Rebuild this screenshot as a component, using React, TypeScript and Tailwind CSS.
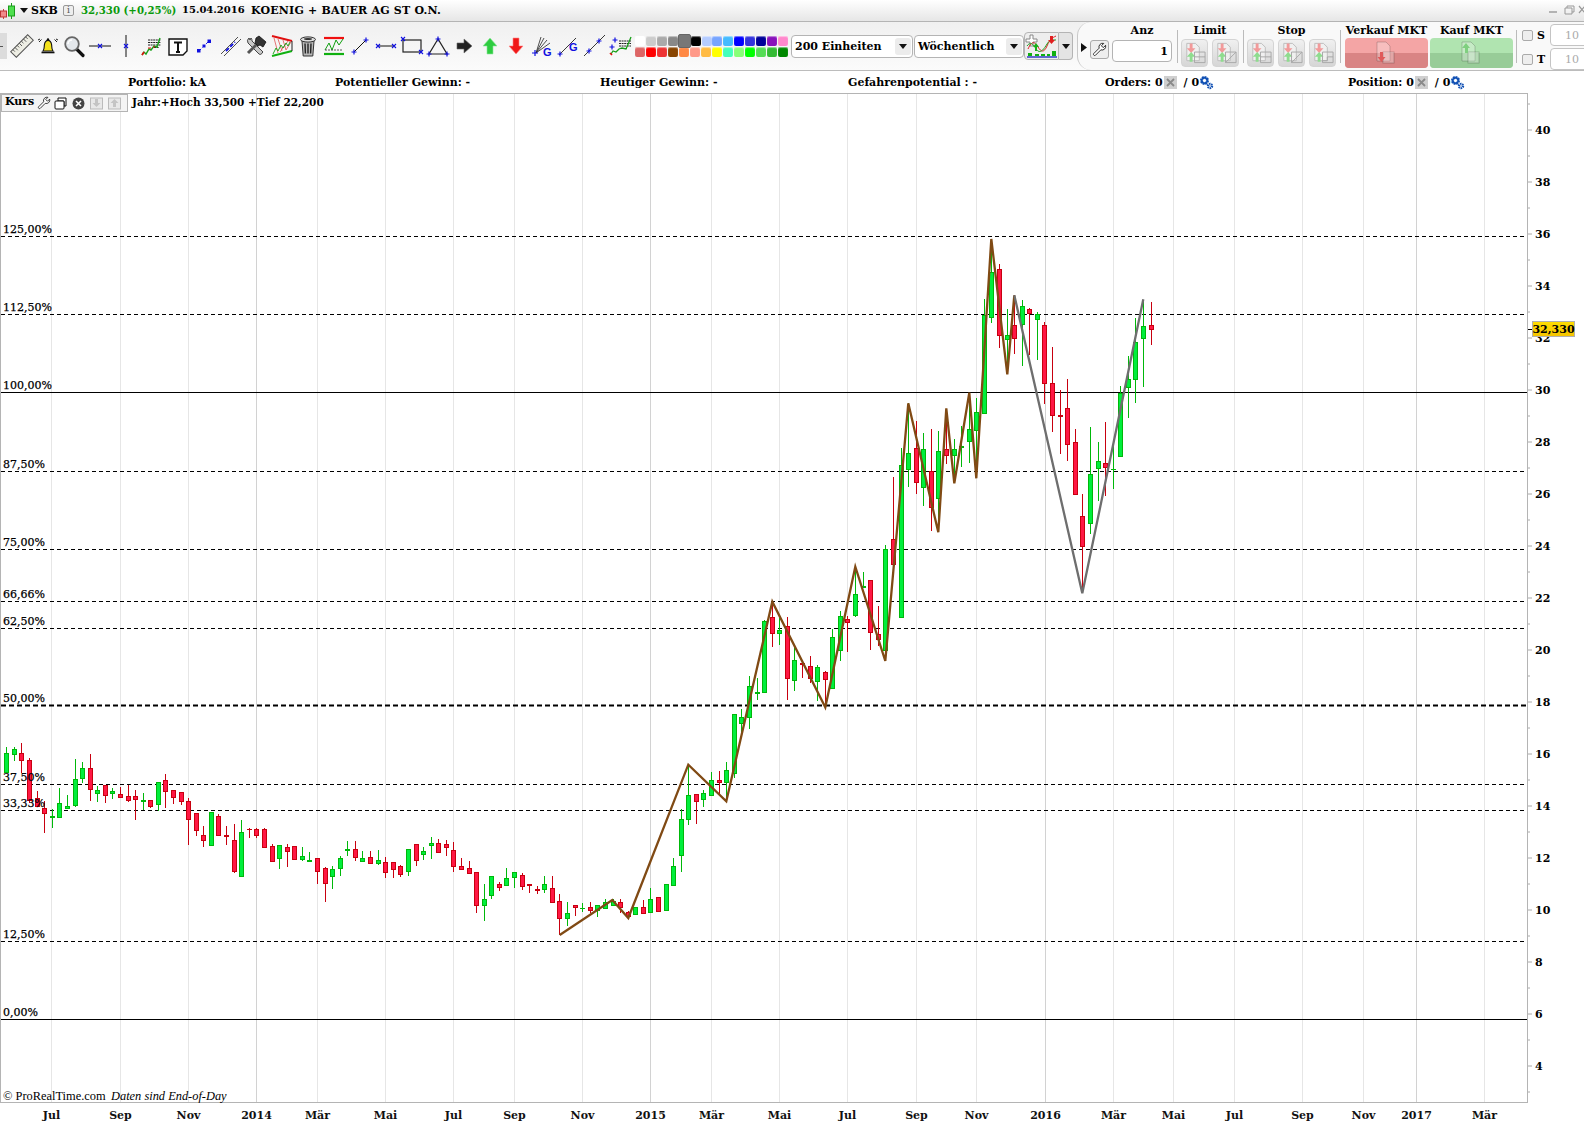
import React from 'react';

type Row = ['g' | 'r', number, number, number, number];

// wick top, body top, body bottom, wick bottom, read off the chart in 3x pixels per block
const blocks: { off: number; rows: Row[] }[] = [
  {
    off: 730,
    rows: [
      ['g', 52, 70, 128, 128], ['g', 52, 58, 73, 92], ['r', 40, 70, 92, 130], ['r', 85, 91, 210, 220],
      ['r', 183, 205, 228, 228], ['r', 212, 235, 250, 308], ['g', 238, 259, 261, 293], ['g', 175, 220, 263, 263],
      ['g', 195, 229, 236, 236], ['g', 88, 148, 227, 231], ['g', 97, 115, 146, 160], ['r', 72, 115, 179, 212],
      ['g', 168, 181, 191, 216], ['r', 165, 166, 196, 219], ['g', 175, 184, 191, 207], ['r', 171, 193, 203, 203],
      ['r', 165, 199, 212, 215], ['r', 180, 199, 209, 269], ['g', 190, 211, 214, 240], ['r', 211, 211, 230, 234],
      ['g', 155, 157, 224, 242], ['r', 132, 151, 184, 234], ['r', 181, 181, 203, 221], ['r', 187, 187, 214, 224],
      ['r', 205, 214, 268, 344], ['r', 250, 250, 301, 318], ['r', 288, 316, 332, 350], ['g', 247, 247, 346, 346],
      ['r', 251, 259, 316, 316], ['r', 288, 316, 319, 344], ['r', 282, 331, 425, 429], ['g', 270, 307, 439, 439],
      ['r', 295, 296, 298, 323], ['r', 295, 297, 314, 324], ['r', 295, 298, 352, 352], ['r', 342, 349, 394, 394],
      ['g', 346, 346, 386, 416], ['r', 342, 352, 365, 410], ['r', 349, 349, 389, 389], ['g', 351, 379, 388, 392],
      ['g', 366, 390, 392, 392], ['r', 385, 385, 424, 461], ['r', 412, 415, 460, 515], ['g', 408, 418, 440, 476],
      ['g', 379, 385, 415, 437], ['g', 334, 358, 362, 377], ['r', 334, 358, 382, 392], ['g', 363, 385, 395, 395],
      ['r', 363, 382, 400, 400], ['g', 361, 391, 401, 404], ['r', 381, 397, 427, 443], ['r', 397, 397, 418, 443],
    ],
  },
  {
    off: 740,
    rows: [
      ['r', 376, 378, 402, 410], ['g', 328, 328, 395, 408], ['r', 313, 313, 362, 378], ['g', 322, 334, 344, 360],
      ['g', 292, 310, 317, 357], ['r', 297, 310, 338, 338], ['r', 300, 313, 323, 348], ['r', 306, 331, 380, 396],
      ['r', 354, 378, 386, 386], ['r', 363, 385, 401, 401], ['r', 397, 397, 497, 519], ['g', 432, 478, 497, 543],
      ['g', 409, 409, 467, 477], ['r', 426, 433, 443, 453], ['g', 384, 415, 437, 437], ['g', 397, 397, 412, 444],
      ['r', 400, 406, 440, 450], ['r', 433, 433, 437, 459], ['r', 438, 448, 452, 462], ['g', 408, 433, 449, 459],
      ['r', 408, 445, 488, 488], ['r', 462, 484, 536, 585], ['g', 486, 520, 536, 558], ['r', 496, 496, 502, 528],
      ['g', 489, 503, 506, 516], ['r', 486, 502, 510, 520], ['g', 496, 496, 512, 531], ['g', 478, 487, 506, 506],
      ['g', 477, 482, 494, 494], ['r', 477, 487, 502, 518], ['r', 514, 515, 527, 527], ['g', 502, 502, 522, 525],
      ['r', 480, 502, 521, 521], ['g', 444, 478, 518, 518], ['r', 472, 472, 514, 514], ['g', 433, 433, 512, 512],
      ['g', 354, 379, 437, 437], ['g', 208, 238, 347, 396], ['g', 75, 166, 239, 255], ['r', 163, 163, 185, 252],
      ['g', 150, 160, 179, 201], ['g', 97, 121, 166, 166], ['r', 93, 121, 128, 165], ['g', 66, 91, 128, 185],
    ],
  },
  {
    off: 540,
    rows: [
      ['g', 523, 523, 700, 713], ['g', 507, 532, 551, 575], ['g', 408, 439, 532, 566], ['g', 415, 456, 458, 480],
      ['g', 240, 244, 457, 457], ['r', 190, 232, 280, 320], ['g', 235, 271, 280, 314], ['r', 232, 257, 412, 479],
      ['g', 320, 361, 421, 452], ['r', 370, 370, 372, 413], ['r', 349, 379, 415, 429], ['g', 376, 382, 424, 482],
      ['r', 393, 397, 418, 500], ['g', 268, 292, 445, 445], ['g', 214, 229, 331, 362], ['r', 228, 238, 247, 335],
      ['g', 90, 163, 226, 230], ['g', 97, 139, 142, 145], ['r', 121, 121, 277, 329], ['r', 198, 283, 299, 318],
      ['g', 15, 28, 331, 360],
    ],
  },
  {
    off: 380,
    rows: [
      ['r', 292, 478, 552, 564], ['g', 205, 256, 711, 711], ['g', 70, 220, 268, 320], ['r', 124, 205, 307, 341],
      ['g', 160, 208, 322, 377], ['r', 148, 274, 383, 452], ['g', 153, 214, 355, 450], ['r', 90, 208, 226, 252],
      ['g', 178, 208, 226, 310], ['g', 138, 199, 200, 262], ['g', 40, 148, 184, 248], ['g', 55, 97, 151, 295],
    ],
  },
  {
    off: 220,
    rows: [
      ['g', 238, 286, 580, 580], ['g', 60, 157, 292, 308], ['r', 132, 148, 346, 383], ['g', 268, 346, 358, 460],
      ['r', 226, 316, 355, 402], ['g', 240, 259, 313, 437], ['r', 265, 268, 281, 406], ['g', 277, 283, 298, 419],
      ['r', 307, 316, 490, 551], ['r', 381, 490, 586, 635], ['r', 510, 585, 588, 702], ['r', 478, 564, 672, 723],
    ],
  },
  {
    off: 380,
    rows: [
      ['r', 148, 187, 343, 343], ['r', 342, 409, 500, 625], ['g', 141, 283, 430, 461], ['g', 186, 244, 265, 362],
      ['r', 127, 250, 263, 347], ['g', 178, 266, 268, 326], ['g', 18, 40, 229, 229],
    ],
  },
  {
    off: 220,
    rows: [
      ['g', 408, 478, 503, 593], ['g', 295, 367, 479, 548], ['g', 240, 319, 355, 500], ['r', 247, 316, 329, 375],
    ],
  },
];

const candles = blocks.flatMap((b) =>
  b.rows.map((r) => ({
    c: r[0],
    h: b.off + r[1] / 3,
    t: b.off + r[2] / 3,
    b: b.off + r[3] / 3,
    l: b.off + r[4] / 3,
  })),
);

const levels = [
  { label: '125,00%', y: 236.5 },
  { label: '112,50%', y: 314.5 },
  { label: '100,00%', y: 392.5, solid: true },
  { label: '87,50%', y: 471.5 },
  { label: '75,00%', y: 549.5 },
  { label: '66,66%', y: 601.5 },
  { label: '62,50%', y: 628.5 },
  { label: '50,00%', y: 705.5, thick: true },
  { label: '37,50%', y: 784.5 },
  { label: '33,33%', y: 810.5 },
  { label: '12,50%', y: 941.5 },
  { label: '0,00%', y: 1019.5, solid: true },
];

const months: [string, number, boolean?][] = [
  ['Jul', 51.5], ['Sep', 120.5], ['Nov', 188.5], ['2014', 256.5, true], ['Mär', 317.5], ['Mai', 385.5], ['Jul', 453.5],
  ['Sep', 514.5], ['Nov', 582.5], ['2015', 650.5, true], ['Mär', 711.5], ['Mai', 779.5], ['Jul', 847.5], ['Sep', 916.5],
  ['Nov', 976.5], ['2016', 1045.5, true], ['Mär', 1113.5], ['Mai', 1173.5], ['Jul', 1234.5], ['Sep', 1302.5],
  ['Nov', 1363.5], ['2017', 1416.5, true], ['Mär', 1484.5],
];

const brown = '559.7,935 612.3,900 628.3,918 688.3,764.7 726.3,801.3 772.3,601.7 825.3,707.3 855.3,566.7 885.3,661 908.3,403.3 938.3,532.3 946.3,408.3 954.3,483.3 969.3,392.7 976.3,478.3 991.3,239 1007.3,374.3 1014.3,295.3';
const grey = '1014.3,295.3 1082.3,593.3 1143.3,299.3';

const priceY = (p: number) => 389.7 + (30 - p) * 26;

function Chart() {
  const ticks = Array.from({ length: 40 }, (_, i) => i + 3);
  const labels = Array.from({ length: 19 }, (_, i) => 4 + i * 2);
  return (
    <svg viewBox="0 93 1584 1029" width={1584} height={1029} className="block">
      {months.map(([m, x, year]) => (
        <line key={x} x1={x} x2={x} y1={94} y2={1102} stroke={year ? '#d2d2d2' : '#e6e6e6'} />
      ))}
      {levels.map((l) => (
        <line
          key={l.label}
          x1={1}
          x2={1527}
          y1={l.y}
          y2={l.y}
          stroke="#000"
          strokeWidth={l.thick ? 2 : 1}
          strokeDasharray={l.solid ? undefined : l.thick ? '5 3' : '4 3'}
        />
      ))}
      <g shapeRendering="crispEdges">
        {candles.map((k, i) => {
          const x = Math.round(6.3 + 7.578 * i);
          const edge = k.c === 'g' ? '#00b80a' : '#c8000f';
          const fill = k.c === 'g' ? '#00ee3c' : '#ff1744';
          return (
            <g key={i}>
              <line x1={x + 0.5} x2={x + 0.5} y1={k.h} y2={k.l} stroke={edge} />
              {k.b - k.t < 2 ? (
                <rect x={x - 2} y={k.t} width={5} height={1.5} fill={edge} />
              ) : (
                <rect x={x - 1.5} y={Math.round(k.t) + 0.5} width={4} height={Math.round(k.b - k.t)} fill={fill} stroke={edge} />
              )}
            </g>
          );
        })}
      </g>
      <polyline points={brown} fill="none" stroke="#804a14" strokeWidth={2.3} strokeLinejoin="miter" />
      <polyline points={grey} fill="none" stroke="#6e6e6e" strokeWidth={2.3} />
      <line x1={0} x2={1528} y1={93.5} y2={93.5} stroke="#b4b4b4" />
      <line x1={0} x2={1528} y1={1102.5} y2={1102.5} stroke="#b4b4b4" />
      <line x1={0.5} x2={0.5} y1={93} y2={1102} stroke="#b4b4b4" />
      <line x1={1527.5} x2={1527.5} y1={93} y2={1103} stroke="#b4b4b4" />
      {ticks.map((p) => (
        <line key={p} x1={1528} x2={p % 2 === 0 ? 1532 : 1530} y1={priceY(p) + 0.3} y2={priceY(p) + 0.3} stroke="#aaa" />
      ))}
      {labels.map((p) => (
        <text key={p} x={1535} y={priceY(p) + 4} className="font-['DejaVu_Serif'] text-[11px] font-bold" fill="#000">
          {p}
        </text>
      ))}
      {months.map(([m, x, year]) => (
        <text
          key={x}
          x={x}
          y={1119}
          textAnchor="middle"
          className="font-['DejaVu_Serif'] text-[11px] font-bold"
          fill="#111"
        >
          {m}
        </text>
      ))}
      {levels.map((l) => (
        <text key={l.label} x={3} y={l.y - 4} className="font-['DejaVu_Serif'] text-[11px] font-normal" fill="#000" stroke="#000" strokeWidth={0.25}>
          {l.label}
        </text>
      ))}
      <text x={3} y={1100} className="font-['Liberation_Serif'] text-[12.4px] font-normal" fill="#000">
        © ProRealTime.com
      </text>
      <text x={111} y={1100} className="font-['Liberation_Serif'] text-[12.4px] font-normal italic" fill="#000">
        Daten sind End-of-Day
      </text>
    </svg>
  );
}

const blue = '#1010e0';

function Cross({ x, y, s = 2.5, c = blue }: { x: number; y: number; s?: number; c?: string }) {
  return <path d={`M${x - s} ${y}H${x + s}M${x} ${y - s}V${y + s}`} stroke={c} strokeWidth={1.2} fill="none" />;
}

function X({ x, y, s = 2, c = blue }: { x: number; y: number; s?: number; c?: string }) {
  return <path d={`M${x - s} ${y - s}L${x + s} ${y + s}M${x + s} ${y - s}L${x - s} ${y + s}`} stroke={c} strokeWidth={1.1} fill="none" />;
}

const icons: React.ReactNode[] = [
  // ruler
  <g key="ruler" transform="rotate(-45 12 12)">
    <rect x={0} y={8} width={24} height={8} fill="#eeeee4" stroke="#555" />
    <path d="M3 8v3M6 8v4M9 8v3M12 8v4M15 8v3M18 8v4M21 8v3" stroke="#555" strokeWidth={0.9} />
  </g>,
  // bell
  <g key="bell">
    <path d="M7 17c1.6-1.8 1-4 1.4-6.4C9 7.6 10.6 6.4 12 6.4s3 1.2 3.6 4.2c.4 2.4-.2 4.6 1.4 6.4z" fill="#f4e21e" stroke="#111" strokeWidth={1.1} />
    <path d="M5.5 18.5h13" stroke="#111" strokeWidth={1.6} />
    <circle cx={12} cy={5.5} r={1.2} fill="#111" />
    <path d="M5.5 5.5 3 8M18.5 5.5 21 8M2 6l2-1M22 6l-2-1" stroke="#222" strokeWidth={1} fill="none" />
  </g>,
  // magnifier
  <g key="mag">
    <path d="M14.5 15l6.5 6.5" stroke="#111" strokeWidth={3.2} strokeLinecap="round" />
    <circle cx={10} cy={10} r={6.8} fill="#e4e8ec" stroke="#666" strokeWidth={1.8} />
    <path d="M6 10a4 4 0 0 1 4-4" stroke="#fff" strokeWidth={1.4} fill="none" />
  </g>,
  // horizontal line
  <g key="hl">
    <path d="M1 12h22" stroke="#111" strokeWidth={1} />
    <X x={12} y={12} />
  </g>,
  // vertical line
  <g key="vl">
    <path d="M12 1v22" stroke="#111" strokeWidth={1} />
    <X x={12} y={12} />
  </g>,
  // chart with order lines
  <g key="ord">
    <path d="M8 6h13M8 8.5h13M8 11h13M14 13.5h5" stroke="#222" strokeWidth={1} strokeDasharray="2 0.6" />
    <path d="M2 21l2-3 2 2 3-5 2 1 3-4 3 1 3-9" stroke="#18a018" strokeWidth={1.4} fill="none" />
    <path d="M2 21l2-3" stroke="#e01010" strokeWidth={1.6} />
    <path d="M8 14h3M13 13h2" stroke="#e01010" strokeWidth={1.2} />
  </g>,
  // text note
  <g key="txt">
    <path d="M3 5h18v12l-4 4H3z" fill="#fff" stroke="#111" strokeWidth={1.4} />
    <path d="M8 8.5h8M12 8.5V18M10 18h4" stroke="#111" strokeWidth={2} fill="none" />
  </g>,
  // segment with square ends
  <g key="seg">
    <path d="M7 17 17 7" stroke={blue} strokeWidth={1} strokeDasharray="3 2" />
    <rect x={5} y={15} width={3.5} height={3.5} fill={blue} />
    <rect x={15.5} y={5.5} width={3.5} height={3.5} fill={blue} />
    <rect x={10.5} y={10.5} width={3} height={3} fill={blue} />
  </g>,
  // parallel
  <g key="par">
    <path d="M3 20 20 3M6 22 23 5" stroke="#222" strokeWidth={0.8} />
    <path d="M8 17 17 8" stroke={blue} strokeWidth={1.8} strokeDasharray="4 2" />
  </g>,
  // tools
  <g key="tools">
    <path d="M5 4a4 4 0 0 0-1 5l11 11c1 1 3 0 3-1l1-1L8 7a4 4 0 0 0-1-3L6 6z" fill="#c8c8c8" stroke="#444" strokeWidth={1} />
    <path d="M4 19 15 8" stroke="#555" strokeWidth={3} />
    <path d="M12 4l3-2 7 6-3 5-3-2-2 1-3-3z" fill="#333" stroke="#111" strokeWidth={0.8} />
  </g>,
  // wedge
  <g key="wedge">
    <path d="M2 2 22 7" stroke="#e01010" strokeWidth={2} />
    <path d="M2 22 22 17" stroke="#10b010" strokeWidth={2} />
    <path d="M4 4l4 15M8 5l4 12M13 6l3 10M18 7l-8 11M21 8l-5 8" stroke="#e05050" strokeWidth={0.8} />
    <path d="M3 20l3-6 2 3 3-6 2 3 3-5 2 3 2-4" stroke="#10a010" strokeWidth={0.9} fill="none" />
    <path d="M22 7v10" stroke="#222" strokeWidth={1} />
  </g>,
  // trash
  <g key="trash">
    <path d="M6 7h12l-1.2 15H7.2z" fill="#b8b8b8" stroke="#333" strokeWidth={1} />
    <path d="M9 9.5l.4 10M12 9.5v10M15 9.5l-.4 10" stroke="#222" strokeWidth={1.4} />
    <ellipse cx={12} cy={5.5} rx={7.5} ry={2.6} fill="#ddd" stroke="#333" strokeWidth={1} />
    <ellipse cx={12} cy={5} rx={4} ry={1} fill="#333" />
  </g>,
  // channel
  <g key="chan">
    <path d="M2 4h20" stroke="#f01010" strokeWidth={2.2} />
    <path d="M2 20h20" stroke="#10b010" strokeWidth={2.2} />
    <path d="M3 16l4-7 3 7 4-10 3 5 4-6" stroke="#10a010" strokeWidth={1} fill="none" />
    <path d="M3 16h17" stroke="#333" strokeWidth={0.8} strokeDasharray="2 1" />
  </g>,
  // ray
  <g key="ray">
    <path d="M6 18 18 6" stroke="#111" strokeWidth={1} />
    <Cross x={6} y={18} />
    <Cross x={18} y={6} />
  </g>,
  // horizontal segment
  <g key="hs">
    <path d="M4 12h16" stroke="#111" strokeWidth={1} />
    <X x={4} y={12} />
    <X x={20} y={12} />
  </g>,
  // rectangle
  <g key="rect">
    <rect x={3} y={6} width={18} height={12} fill="none" stroke="#222" strokeWidth={1.2} />
    <X x={3} y={5} />
    <X x={21} y={18} />
  </g>,
  // triangle
  <g key="tri">
    <path d="M12 5 3 20h18z" fill="none" stroke="#222" strokeWidth={1.2} />
    <Cross x={12} y={5} />
    <Cross x={3} y={20} />
    <Cross x={21} y={20} />
  </g>,
  // black arrow
  <path key="arrow" d="M5 9h7V5l8 7-8 7v-4H5z" fill="#222" stroke="#666" strokeWidth={0.6} />,
  // green up
  <path key="up" d="M12 4l7 8h-4v8H9v-8H5z" fill="#2ecc40" stroke="#8fe89a" strokeWidth={0.6} />,
  // red down
  <path key="down" d="M9 4h6v8h4l-7 8-7-8h4z" fill="#f01818" stroke="#f88" strokeWidth={0.6} />,
  // fan
  <g key="fan">
    <path d="M6 19 11 3M6 19 14 4M6 19 17 6M6 19 20 9" stroke="#222" strokeWidth={0.8} />
    <Cross x={5} y={19} s={3} />
    <text x={13} y={22} className="font-['Liberation_Sans'] text-[11px] font-bold" fill={blue}>G</text>
  </g>,
  // line G
  <g key="lg">
    <path d="M3 21 20 4" stroke="#222" strokeWidth={0.9} />
    <Cross x={4} y={20} s={2.5} />
    <text x={13} y={17} className="font-['Liberation_Sans'] text-[11px] font-bold" fill={blue}>G</text>
  </g>,
  // line two crosses
  <g key="l2">
    <path d="M2 22 23 1" stroke="#222" strokeWidth={0.9} />
    <Cross x={7} y={17} />
    <Cross x={17} y={7} />
  </g>,
  // chart with cross
  <g key="ordg">
    <path d="M11 7h12M11 9.5h12M11 12h12M13 14.5h6" stroke="#222" strokeWidth={1} strokeDasharray="2 0.6" />
    <path d="M3 20l2-3 3 1 3-3 3-1 4 1 3-7 2-5" stroke="#18a018" strokeWidth={1.3} fill="none" />
    <Cross x={7} y={6} />
    <Cross x={4} y={13} />
    <path d="M2 19l2 2" stroke="#e01010" strokeWidth={1.6} />
  </g>,
];

const palette = [
  ['#ffffff', '#cccccc', '#aaaaaa', '#888888', '#777777', '#000000', '#b5ccff', '#77a5ff', '#44bbff', '#0000ff', '#3333dd', '#000099', '#8811bb', '#ff88cc'],
  ['#dd6666', '#ff0000', '#ee3333', '#884400', '#ff8844', '#ff9988', '#ffbb44', '#ffff00', '#44ffbb', '#88ff77', '#00ff00', '#55dd55', '#33bb33', '#008800'],
];

function Select({ label, width }: { label: string; width: string }) {
  return (
    <div className={`${width} flex h-[23px] items-center justify-between rounded-[4px] border border-[#b4b4b4] bg-white pl-[3px] pr-[1px]`}>
      <span>{label}</span>
      <span className="flex h-[17px] w-[16px] items-center justify-center rounded-[3px] bg-[#ececec]">
        <svg width={8} height={5} viewBox="0 0 8 5"><path d="M0 0h8L4 5z" fill="#111" /></svg>
      </span>
    </div>
  );
}

function OrderGlyph({ up, down, box }: { up?: boolean; down?: boolean; box?: 'rect' | 'diag' | 'step' }) {
  return (
    <svg width={26} height={26} viewBox="0 0 26 26">
      <path d="M5 3h9l4 4v14H5z" fill="#f0f0f0" stroke="#bdbdbd" />
      {down && <path d="M8 3h3v5h3l-4.5 5L5 8h3z" fill="#f29a9a" />}
      {up && <path d="M9.5 12 14 17h-3v5H8v-5H5z" fill="#8fdc8f" />}
      {box === 'rect' && <path d="M13 12h11v11H13zM13 17h11" fill="none" stroke="#a8a8a8" />}
      {box === 'diag' && <path d="M13 12h11v11H13zM13 23 24 12" fill="none" stroke="#a8a8a8" />}
      {box === 'step' && <path d="M13 12h11v11H13zM13 21h5v-4h6" fill="none" stroke="#a8a8a8" />}
    </svg>
  );
}

function OrderButton({ children }: { children: React.ReactNode }) {
  return (
    <div className="flex h-[28px] w-[27px] items-center justify-center rounded-[4px] border border-[#d4d4d4] bg-linear-to-b from-[#f0f0f0] to-[#d6d6d6]">
      {children}
    </div>
  );
}

function MarketButton({ up, top, bottom }: { up: boolean; top: string; bottom: string }) {
  return (
    <div className={`relative mt-[-1px] flex h-[30px] w-[83px] flex-col overflow-hidden rounded-[4px] ${top}`}>
      <div className="h-[15px]" />
      <div className={`h-[15px] ${bottom}`} />
      <svg width={24} height={24} viewBox="0 0 24 24" className="absolute left-[29px] top-[3px]">
        <path d="M3 1h9l4 4v15H3z" fill="#ffffff" fillOpacity={0.28} stroke="#000" strokeOpacity={0.18} />
        <rect x={9} y={11} width={11} height={11} fill="#ffffff" fillOpacity={0.28} stroke="#000" strokeOpacity={0.2} />
        {up ? (
          <path d="M7 2l4 5H9v5H6V7H3z" fill="#7fcf7f" />
        ) : (
          <path d="M6 11h3v5h2.5L7.5 21l-4-5H6z" fill="#e05a5a" />
        )}
      </svg>
    </div>
  );
}

function Gears() {
  return (
    <svg width={15} height={15} viewBox="0 0 15 15">
      <circle cx={5.5} cy={5.5} r={3} fill="none" stroke="#1050b4" strokeWidth={3} strokeDasharray="1.6 0.7" />
      <circle cx={5.5} cy={5.5} r={2.8} fill="none" stroke="#1050b4" strokeWidth={1.4} />
      <circle cx={11} cy={11} r={2} fill="none" stroke="#1050b4" strokeWidth={2.4} strokeDasharray="1.3 0.6" />
    </svg>
  );
}

function CloseBox() {
  return (
    <span className="mx-[1px] inline-flex h-[13px] w-[13px] items-center justify-center bg-[#cfcfcf]">
      <svg width={9} height={9} viewBox="0 0 9 9"><path d="M1 1l7 7M8 1 1 8" stroke="#8a8a8a" strokeWidth={1.8} /></svg>
    </span>
  );
}

function Wrench({ size = 16 }: { size?: number }) {
  return (
    <svg width={size} height={size} viewBox="0 0 16 16">
      <path d="M14.5 3.5 12 6 10 4l2.5-2.5A4 4 0 0 0 7.6 6.6L1.8 12.4a1.3 1.3 0 0 0 1.8 1.8l5.8-5.8a4 4 0 0 0 5.1-4.9z" fill="#fff" stroke="#222" strokeWidth={1} />
    </svg>
  );
}

export default function App() {
  return (
    <div className="h-[1122px] w-[1584px] overflow-hidden bg-white font-['DejaVu_Serif'] text-[11px] font-bold leading-none text-black">
      {/* title bar */}
      <div className="grid h-[22px] grid-cols-[19px_12px_32px_18px_101px_69px_1fr_48px] items-center whitespace-nowrap border-b border-[#b4b4b4] bg-linear-to-b from-white to-[#e6e6e6] pb-[1px]">
        <svg width={17} height={17} viewBox="0 0 17 17">
          <path d="M3.5 7v10" stroke="#c44" />
          <rect x={0.5} y={9} width={6} height={6} fill="#f08a8a" stroke="#b33" />
          <path d="M11.5 1v16" stroke="#1a9a1a" />
          <rect x={8.5} y={4} width={6} height={10} fill="#4fe04f" stroke="#1a9a1a" />
        </svg>
        <svg width={8} height={5} viewBox="0 0 8 5" className="ml-[1px]"><path d="M0 0h8L4 5z" fill="#111" /></svg>
        <span>SKB</span>
        <span className="flex h-[11px] w-[11px] items-center justify-center rounded-[2px] border border-[#999] bg-[#eee] text-[9px] font-normal text-[#555]">i</span>
        <span className="text-[10.2px] text-[#0a9a0a]">32,330 (+0,25%)</span>
        <span className="text-[10px]">15.04.2016</span>
        <span className="tracking-[0.2px]">KOENIG + BAUER AG ST O.N.</span>
        <svg width={48} height={12} viewBox="0 0 48 12">
          <path d="M13 8h8" stroke="#999" strokeWidth={1.4} />
          <path d="M29 4h7v6h-7zM31 4V2h7v6h-2" fill="none" stroke="#999" />
          <path d="M43 2l6 7M49 2l-6 7" stroke="#999" strokeWidth={1.2} />
        </svg>
      </div>

      {/* toolbar */}
      <div className="flex h-[49px] items-center overflow-hidden border-b border-[#bcbcbc] bg-linear-to-b from-[#f0f0f0] to-[#fbfbfb]">
        <div className="flex h-[26px] w-[7px] shrink-0 items-center bg-[#dcdcdc]">
          <div className="h-[1px] w-[3px] bg-[#555]" />
        </div>
        <div className="ml-[2px] flex shrink-0">
          {icons.map((icon, i) => (
            <div key={i} className="flex h-[26px] w-[26px] items-center justify-center">
              <svg width={24} height={24} viewBox="0 0 24 24">{icon}</svg>
            </div>
          ))}
        </div>
        <div className="ml-[2px] flex w-[153px] shrink-0 flex-col gap-[1px]">
          {palette.map((row, r) => (
            <div key={r} className="flex justify-between">
              {row.map((c, i) => (
                <div
                  key={c}
                  style={{ backgroundColor: c }}
                  className={
                    r === 0 && i === 4
                      ? 'z-10 mx-[-1px] my-[-2px] h-[14px] w-[13px] rounded-[2px] border border-[#666]'
                      : 'h-[10px] w-[10px] rounded-[2px] shadow-[inset_0_1px_1px_rgba(255,255,255,0.5)]'
                  }
                />
              ))}
            </div>
          ))}
        </div>
        <div className="ml-[3px] shrink-0"><Select label="200 Einheiten" width="w-[122px]" /></div>
        <div className="ml-[1px] shrink-0"><Select label="Wöchentlich" width="w-[110px]" /></div>
        <div className="flex h-[28px] w-[35px] shrink-0 items-center justify-center rounded-l-[4px] border border-[#b4b4b4] bg-[#eeeeee]">
          <svg width={33} height={24} viewBox="0 0 33 24">
            <path d="M5 1h3v4h4v3H8v4H5V8H1V5h4z" fill="#fff" stroke="#888" />
            <path d="M3 15c4-9 7-7 10-2s6 6 9-1 5-8 9-10" fill="none" stroke="#e02020" strokeWidth={1} />
            <path d="M2 12c5-7 8 3 11 5s6-2 9-7 6-4 9-4" fill="none" stroke="#20a020" strokeWidth={1} />
            <path d="M25 2h3v4h2l-3.5 4L23 6h2z" fill="#e02020" />
            <path d="M11 9l3 4h-2v4h-2v-4H8z" fill="#18b018" />
            <path d="M3 19h4v3H3zM10 20h4v2h-4zM16 20h4v2h-4zM22 20h3v2h-3zM27 17h4v5h-4z" fill="#10b010" />
            <path d="M2 23h30" stroke="#2030c0" strokeWidth={1.4} />
          </svg>
        </div>
        <div className="flex h-[28px] w-[14px] shrink-0 items-center justify-center rounded-r-[4px] border-y border-r border-[#b4b4b4] bg-[#e4e4e4]">
          <svg width={8} height={5} viewBox="0 0 8 5"><path d="M0 0h8L4 5z" fill="#111" /></svg>
        </div>

        {/* order panel */}
        <div className="ml-[4px] flex h-full shrink-0 items-start rounded-l-[14px] border-l border-[#c8c8c8] bg-[#f9f9f9] pl-[3px]">
          <svg width={6} height={9} viewBox="0 0 6 9" className="mt-[21px]"><path d="M0 0l6 4.5L0 9z" fill="#111" /></svg>
          <div className="ml-[3px] mt-[18px] flex h-[19px] w-[19px] items-center justify-center rounded-[3px] border border-[#aaa] bg-[#eee]">
            <Wrench size={15} />
          </div>
          <div className="ml-[3px] flex w-[60px] flex-col items-center">
            <div className="flex h-[17px] items-center">Anz</div>
            <div className="mt-[1px] flex h-[22px] w-full items-center justify-end rounded-[4px] border border-[#b4b4b4] bg-white pr-[3px]">1</div>
          </div>
          <div className="ml-[5px] mt-[8px] h-[33px] w-[1px] bg-[#bbb]" />
          <div className="ml-[3px] flex flex-col items-center">
            <div className="flex h-[17px] items-center">Limit</div>
            <div className="flex gap-[4px]">
              <OrderButton><OrderGlyph up down box="rect" /></OrderButton>
              <OrderButton><OrderGlyph up down box="diag" /></OrderButton>
            </div>
          </div>
          <div className="ml-[4px] mt-[8px] h-[33px] w-[1px] bg-[#bbb]" />
          <div className="ml-[3px] flex flex-col items-center">
            <div className="flex h-[17px] items-center">Stop</div>
            <div className="flex gap-[4px]">
              <OrderButton><OrderGlyph up down box="rect" /></OrderButton>
              <OrderButton><OrderGlyph up down box="diag" /></OrderButton>
              <OrderButton><OrderGlyph up down box="step" /></OrderButton>
            </div>
          </div>
          <div className="ml-[4px] mt-[8px] h-[33px] w-[1px] bg-[#bbb]" />
          <div className="ml-[4px] flex flex-col items-center">
            <div className="flex h-[17px] items-center whitespace-nowrap">Verkauf MKT</div>
            <MarketButton up={false} top="bg-[#f4a5a5]" bottom="bg-[#d98484]" />
          </div>
          <div className="ml-[2px] flex flex-col items-center">
            <div className="flex h-[17px] items-center whitespace-nowrap">Kauf MKT</div>
            <MarketButton up top="bg-[#b0e4b0]" bottom="bg-[#98cc98]" />
          </div>
          <div className="ml-[3px] mt-[8px] h-[33px] w-[1px] bg-[#bbb]" />
          <div className="ml-[5px] mt-[2px] flex flex-col gap-[2px]">
            {['S', 'T'].map((s) => (
              <div key={s} className="flex h-[22px] items-center">
                <span className="h-[11px] w-[11px] rounded-[2px] border border-[#aaa] bg-[#eee]" />
                <span className="ml-[4px] w-[13px]">{s}</span>
                <span className="flex h-[22px] w-[60px] items-center rounded-[4px] border border-[#c4c4c4] bg-white pl-[14px] font-normal text-[#aaa]">10</span>
              </div>
            ))}
          </div>
        </div>
      </div>

      {/* info row */}
      <div className="grid h-[22px] grid-cols-[128px_207px_265px_248px_257px_243px_1fr] items-center pt-[1px]">
        <span />
        <span>Portfolio: kA</span>
        <span>Potentieller Gewinn: -</span>
        <span>Heutiger Gewinn: -</span>
        <span>Gefahrenpotential : -</span>
        <span className="flex items-center">Orders: 0<CloseBox /><span className="mr-[6px]" />/ 0<Gears /></span>
        <span className="flex items-center">Position: 0<CloseBox /><span className="mr-[6px]" />/ 0<Gears /></span>
      </div>

      {/* chart */}
      <div className="relative">
        <Chart />
        <div className="absolute left-[1px] top-[1px] flex h-[18px] w-[127px] items-center border border-[#b4b4b4] bg-[#f4f4f4] pb-[3px] pl-[3px]">
          <span>Kurs</span>
          <span className="ml-[3px] mt-[3px]"><Wrench size={14} /></span>
          <svg width={13} height={13} viewBox="0 0 13 13" className="ml-[3px] mt-[3px]">
            <path d="M4 1h8v8h-2V4H4z" fill="#fff" stroke="#111" />
            <rect x={1} y={4} width={9} height={8} rx={1} fill="#fff" stroke="#111" />
          </svg>
          <svg width={13} height={13} viewBox="0 0 13 13" className="ml-[5px] mt-[3px]">
            <circle cx={6.5} cy={6.5} r={6} fill="#444" />
            <path d="M4 4l5 5M9 4 4 9" stroke="#fff" strokeWidth={1.6} />
          </svg>
          <svg width={13} height={13} viewBox="0 0 13 13" className="ml-[5px] mt-[3px]">
            <rect x={0.5} y={1} width={12} height={11} fill="#e8e8e8" stroke="#bbb" />
            <path d="M5 2h3v4h2.5l-4 4-4-4H5z" fill="#c4c4c4" />
          </svg>
          <svg width={13} height={13} viewBox="0 0 13 13" className="ml-[5px] mt-[3px]">
            <rect x={0.5} y={1} width={12} height={11} fill="#e8e8e8" stroke="#bbb" />
            <path d="M6.5 2l4 4H8v4H5V6H2.5z" fill="#c4c4c4" />
          </svg>
        </div>
        <span className="absolute left-[132px] top-[1px] flex h-[16px] items-center text-[10.5px]">Jahr:+Hoch 33,500 +Tief 22,200</span>
        {/* last price */}
        <div className="absolute left-[1532px] top-[228px] flex h-[16px] w-[43px] items-center justify-center border border-[#b0b0b0] bg-linear-to-b from-[#ffdc00] to-[#f5c400]">
          32,330
        </div>
        <div className="absolute left-[1528px] top-[236px] h-[1px] w-[4px] bg-black" />
      </div>
    </div>
  );
}
